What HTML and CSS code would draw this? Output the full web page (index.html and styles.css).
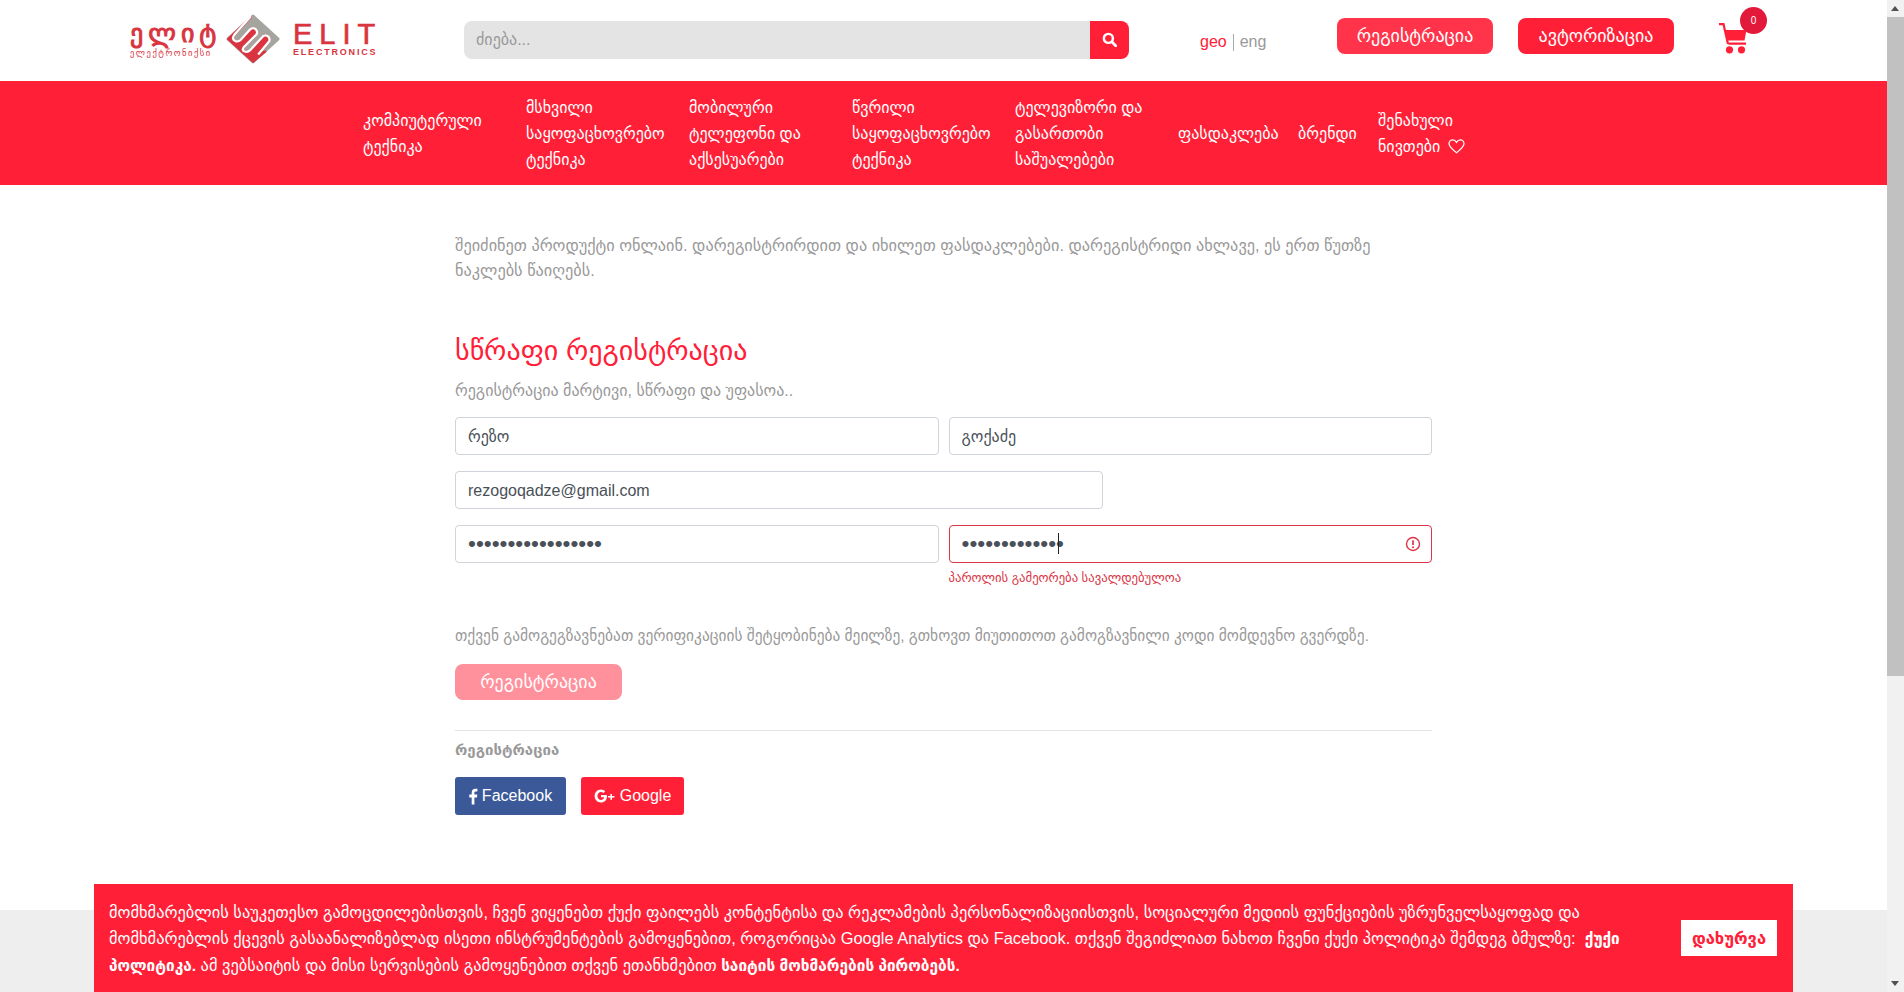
FILE: index.html
```html
<!DOCTYPE html>
<html lang="ka">
<head>
<meta charset="UTF-8" />
<meta name="viewport" content="width=device-width, initial-scale=1.0" />
<title>ელიტ ელექტრონიქსი - რეგისტრაცია</title>
<link rel="stylesheet" href="styles.css">
</head>
<body>

<div class="page">
  <div class="main">

    <header class="top">
      <a class="logo" href="#">
        <span class="logo-ge"><b>ელიტ</b><small>ელექტრონიქსი</small></span>
        <svg class="logo-mark" viewBox="6 3 52 48" width="54" height="50">
          <path d="M32 5 L56 27 L32 49 L8 27 Z" fill="#a5a5a0" stroke="#a5a5a0" stroke-width="3" stroke-linejoin="round"/>
          <path d="M30 6 L14 23 Q11 27 15 29 Q18 30 20 28 L29 18 Q32 15 35 18 Q37 21 35 23 L23 35 Q21 38 24 39 Q27 40 29 38 L41 25 Q44 22 47 25 Q49 28 47 30 L38 41 L44 39 L32 49 L8 27 Z" fill="#d9343f" stroke="#d9343f" stroke-width="2" stroke-linejoin="round"/>
          <path d="M30 5 L14 23 Q11 27 15 29 Q18 30 20 28 L29 18 Q32 15 35 18 Q37 21 35 23 L23 35 Q21 38 24 39 Q27 40 29 38 L41 25 Q44 22 47 25 Q49 28 47 30 L37 42" fill="none" stroke="#fff" stroke-width="2.2"/>
        </svg>
        <span class="logo-en"><b>ELIT</b><small>ELECTRONICS</small></span>
      </a>

      <form class="search">
        <input class="search-input" type="text" placeholder="ძიება...">
        <button class="search-btn" type="button">
          <svg viewBox="0 0 16 16" width="15" height="15"><circle cx="6.8" cy="6.8" r="4.8" fill="none" stroke="#fff" stroke-width="2.6"/><path d="M10.4 10.4 L14.6 14.6" stroke="#fff" stroke-width="3" stroke-linecap="round"/></svg>
        </button>
      </form>

      <div class="lang"><a class="on" href="#">geo</a><i></i><a href="#">eng</a></div>

      <a class="top-btn light" href="#">რეგისტრაცია</a>
      <a class="top-btn" href="#">ავტორიზაცია</a>

      <a class="cart" href="#">
        <svg viewBox="0 0 30 31" width="30" height="31">
          <path d="M0 1.2 H4.5 L9 21" fill="none" stroke="#ff2038" stroke-width="2.2"/>
          <path d="M6 7 H27.5 L25.5 17.5 H8 Z M9 19.5 H27 V21.7 H9.5 Z" fill="#ff2038"/>
          <circle cx="10.5" cy="26.8" r="3.6" fill="#ff2038"/><circle cx="22.5" cy="26.8" r="3.6" fill="#ff2038"/>
        </svg>
        <span class="badge">0</span>
      </a>
    </header>

    <nav class="menu">
      <a class="wide" href="#">კომპიუტერული ტექნიკა</a>
      <a class="wide" href="#">მსხვილი საყოფაცხოვრებო ტექნიკა</a>
      <a class="wide" href="#">მობილური ტელეფონი და აქსესუარები</a>
      <a class="wide" href="#">წვრილი საყოფაცხოვრებო ტექნიკა</a>
      <a class="wide" href="#">ტელევიზორი და გასართობი საშუალებები</a>
      <a class="sale" href="#">ფასდაკლება</a>
      <a class="brand" href="#">ბრენდი</a>
      <a class="saved" href="#">შენახული ნივთები
        <svg viewBox="0 0 18 16" width="17" height="15"><path d="M9 14.6 C4 10.6 1 8 1 5 C1 2.6 2.9 1 4.9 1 C6.6 1 8.1 2 9 3.6 C9.9 2 11.4 1 13.1 1 C15.1 1 17 2.6 17 5 C17 8 14 10.6 9 14.6 Z" fill="none" stroke="#fff" stroke-width="1.3"/></svg>
      </a>
    </nav>

    <section class="content">
      <p class="intro">შეიძინეთ პროდუქტი ონლაინ. დარეგისტრირდით და იხილეთ ფასდაკლებები. დარეგისტრიდი ახლავე, ეს ერთ წუთზე<br>ნაკლებს წაიღებს.</p>
      <h2 class="title">სწრაფი რეგისტრაცია</h2>
      <p class="sub">რეგისტრაცია მარტივი, სწრაფი და უფასოა..</p>

      <form class="reg">
        <div class="row">
          <input class="field" type="text" value="რეზო">
          <input class="field" type="text" value="გოქაძე">
        </div>
        <div class="row">
          <input class="field email" type="text" value="rezogoqadze@gmail.com">
        </div>
        <div class="row">
          <input class="field pass" type="password" value="rezogoqadze123456">
          <div class="col">
            <div class="invalid-wrap">
              <input class="field pass invalid" type="password" value="rezogoqadze12">
              <span class="caret"></span>
              <svg class="invalid-icon" viewBox="0 0 16 16" width="16" height="16"><circle cx="8" cy="8" r="6.5" fill="none" stroke="#dc3545" stroke-width="1.4"/><path d="M8 4.2 V9" stroke="#dc3545" stroke-width="1.7"/><circle cx="8" cy="11.3" r="1" fill="#dc3545"/></svg>
            </div>
            <span class="error">პაროლის გამეორება სავალდებულოა</span>
          </div>
        </div>
        <p class="note">თქვენ გამოგეგზავნებათ ვერიფიკაციის შეტყობინება მეილზე, გთხოვთ მიუთითოთ გამოგზავნილი კოდი მომდევნო გვერდზე.</p>
        <button class="submit" type="button">რეგისტრაცია</button>
      </form>

      <hr class="line">
      <h6 class="social-title">რეგისტრაცია</h6>
      <div class="social">
        <a class="fb" href="#">
          <svg viewBox="0 0 10 18" width="9" height="17"><path d="M3 18 V10 H0.3 V6.8 H3 V4.6 C3 1.8 4.6 0.4 7 0.4 C8.1 0.4 9 0.5 9.3 0.5 V3.4 H7.6 C6.3 3.4 6 4 6 5 V6.8 H9.2 L8.8 10 H6 V18 Z" fill="#fff"/></svg>
          Facebook</a>
        <a class="gp" href="#">
          <svg viewBox="0 0 22 14" width="22" height="14"><path d="M12.6 6 H7 V8.3 H10.2 C9.8 10 8.6 11 7 11 C5 11 3.4 9.2 3.4 7 C3.4 4.8 5 3 7 3 C8 3 8.8 3.4 9.4 4 L11.2 2.3 C10.1 1.2 8.7 0.5 7 0.5 C3.4 0.5 0.6 3.4 0.6 7 C0.6 10.6 3.4 13.5 7 13.5 C10.6 13.5 13 11 13 7.2 C13 6.8 12.9 6.4 12.6 6 Z M18 5 V7 H20.4 V8.6 H18 V10.8 H16.4 V8.6 H14 V7 H16.4 V5 Z" fill="#fff"/></svg>
          Google</a>
      </div>
    </section>

    <footer class="foot"></footer>
  </div>

  <div class="scrollbar">
    <span class="arrow up"></span>
    <div class="track"><div class="thumb"></div></div>
    <span class="arrow down"></span>
  </div>
</div>

<div class="cookie">
  <p>მომხმარებლის საუკეთესო გამოცდილებისთვის, ჩვენ ვიყენებთ ქუქი ფაილებს კონტენტისა და რეკლამების პერსონალიზაციისთვის, სოციალური მედიის ფუნქციების უზრუნველსაყოფად და<br>
  მომხმარებლის ქცევის გასაანალიზებლად ისეთი ინსტრუმენტების გამოყენებით, როგორიცაა Google Analytics და Facebook. თქვენ შეგიძლიათ ნახოთ ჩვენი ქუქი პოლიტიკა შემდეგ ბმულზე: &nbsp;<b>ქუქი<br>
  პოლიტიკა.</b> ამ ვებსაიტის და მისი სერვისების გამოყენებით თქვენ ეთანხმებით <b>საიტის მოხმარების პირობებს.</b></p>
  <button class="cookie-close" type="button">დახურვა</button>
</div>

</body>
</html>
```

FILE: styles.css
```css
html, body { margin: 0; height: 100%; overflow: hidden; }
body { font-family: "Liberation Sans", "DejaVu Sans", sans-serif; font-size: 16px; color: #999; background: #fff; }
a { text-decoration: none; color: inherit; }
p, h2, h6 { margin: 0; }

.page { display: flex; height: 992px; }
.main { flex: 1; min-width: 0; display: flex; flex-direction: column; }

/* header */
.top { height: 81px; display: flex; align-items: center; padding-left: 130px; box-sizing: border-box; }
.logo { display: flex; align-items: center; width: 247px; margin-right: 87px; margin-top: -3px; color: #d9343f; }
.logo-ge, .logo-en { display: flex; flex-direction: column; line-height: 1; }
.logo-ge { width: 96px; flex: none; }
.logo-ge b { font-size: 26px; font-weight: 400; letter-spacing: 5px; white-space: nowrap; -webkit-text-stroke: 1px #d9343f; line-height: 24px; }
.logo-ge small { font-size: 8.6px; letter-spacing: 1.5px; margin-top: 4px; white-space: nowrap; }
.logo-mark { margin-right: 13px; flex: none; }
.logo-en b { font-size: 29px; letter-spacing: 7px; font-weight: 400; -webkit-text-stroke: .7px #d9343f; line-height: 24px; }
.logo-en small { font-size: 9px; letter-spacing: 1.8px; margin-top: 2px; font-weight: 700; }

.search { display: flex; width: 665px; height: 38px; margin-right: 71px; margin-top: -2px; }
.search-input { flex: 1; min-width: 0; border: 0; padding: 0 12px; background: #e4e4e4; border-radius: 8px 0 0 8px; font: 16px "Liberation Sans", "DejaVu Sans", sans-serif; }
.search-input::placeholder { color: #999; }
.search-btn { width: 39px; border: 0; padding: 0; background: #ff2038; border-radius: 0 8px 8px 0; display: flex; align-items: center; justify-content: center; }

.lang { width: 137px; display: flex; align-items: center; font-size: 16px; margin-top: 3px; }
.lang .on { color: #ff2038; }
.lang i { width: 1px; height: 17px; background: #aaa; margin: 0 6px; }

.top-btn { width: 156px; height: 36px; margin-top: -9px; margin-right: 25px; border-radius: 8px; background: #ff2038; color: #fff; font-size: 18px; display: flex; align-items: center; justify-content: center; }
.top-btn.light { background: #ff3349; }

.cart { position: relative; margin-left: 20px; height: 31px; margin-top: -5px; }
.badge { position: absolute; left: 21px; top: -16px; width: 27px; height: 27px; border-radius: 50%; background: #e2193a; color: #fff; font-size: 10px; display: flex; align-items: center; justify-content: center; }

/* menu */
.menu { height: 104px; background: #ff2038; display: flex; align-items: center; padding-left: 353px; color: #fff; font-size: 16px; line-height: 26px; }
.menu a { box-sizing: border-box; padding: 1px 10px 0; }
.menu .wide { width: 163px; }
.menu .sale { width: 120px; }
.menu .brand { width: 80px; }
.menu .saved { width: 110px; }
.menu svg { vertical-align: -2px; margin-left: 3px; }

/* form */
.content { width: 977px; margin-left: 455px; height: 725px; box-sizing: border-box; padding-top: 48px; }
.intro { font-size: 16.3px; line-height: 25px; }
.title { color: #ff2038; font-size: 28px; font-weight: 400; line-height: 34px; margin-top: 51px; }
.sub { font-size: 16px; line-height: 20px; margin-top: 13px; }

.reg { margin-top: 16px; }
.row { display: grid; grid-template-columns: 1fr 1fr; gap: 10px; margin-bottom: 16px; }
.field { box-sizing: border-box; width: 100%; height: 38px; padding: 0 12px; border: 1px solid #ced4da; border-radius: 4px; font: 16px "Liberation Sans", "DejaVu Sans", sans-serif; color: #495057; outline: none; background: #fff; }
.field.email { grid-column: 1 / -1; width: 648px; padding-top: 2px; }
.field.pass { font-size: 22.5px; }
.field.invalid { border-color: #dc3545; }
.invalid-wrap { position: relative; }
.invalid-icon { position: absolute; right: 11px; top: 11px; }
.caret { position: absolute; left: 109px; top: 8px; width: 1px; height: 21px; background: #222; }
.error { display: block; color: #dc3545; font-size: 12.7px; line-height: 16px; margin-top: 7px; }
.note { font-size: 15.4px; line-height: 20px; margin-top: 40px; }
.submit { display: block; width: 167px; height: 36px; margin-top: 18px; border: 0; border-radius: 8px; background: #ff919c; color: #fff; font: 18px "Liberation Sans", "DejaVu Sans", sans-serif; }

.line { border: 0; border-top: 1px solid #e3e3e3; margin: 30px 0 0; }
.social-title { font-size: 15px; font-weight: 700; line-height: 20px; margin-top: 9px; }
.social { display: flex; gap: 15px; margin-top: 17px; }
.social a { height: 38px; border-radius: 3px; color: #fff; font-size: 16px; display: flex; align-items: center; justify-content: center; gap: 4px; }
.fb { width: 111px; background: #3b5998; }
.gp { width: 103px; background: #ff2038; }

.foot { flex: 1; background: #eee; }

/* fake scrollbar, the page itself does not scroll here */
.scrollbar { width: 17px; background: #f1f1f1; display: flex; flex-direction: column; }
.arrow { height: 17px; position: relative; }
.arrow::after { content: ""; position: absolute; left: 4px; border-left: 4px solid transparent; border-right: 4px solid transparent; }
.arrow.up::after { top: 6px; border-bottom: 5px solid #505050; }
.arrow.down::after { top: 6px; border-top: 5px solid #505050; }
.track { flex: 1; }
.thumb { height: 659px; background: #c1c1c1; }

/* cookie bar */
.cookie { position: fixed; left: 94px; bottom: 0; width: 1699px; height: 108px; box-sizing: border-box; padding: 15px 16px 0 15px; background: #ff2038; color: #fff; display: flex; align-items: center; justify-content: space-between; font-size: 16.4px; line-height: 26px; }
.cookie p { white-space: nowrap; margin-top: -13px; }
.cookie b { font-size: 15.4px; }
.cookie-close { width: 96px; height: 36px; margin-top: -15px; border: 0; background: #fff; color: #ff2038; font: 700 16.5px "Liberation Sans", "DejaVu Sans", sans-serif; }
```
